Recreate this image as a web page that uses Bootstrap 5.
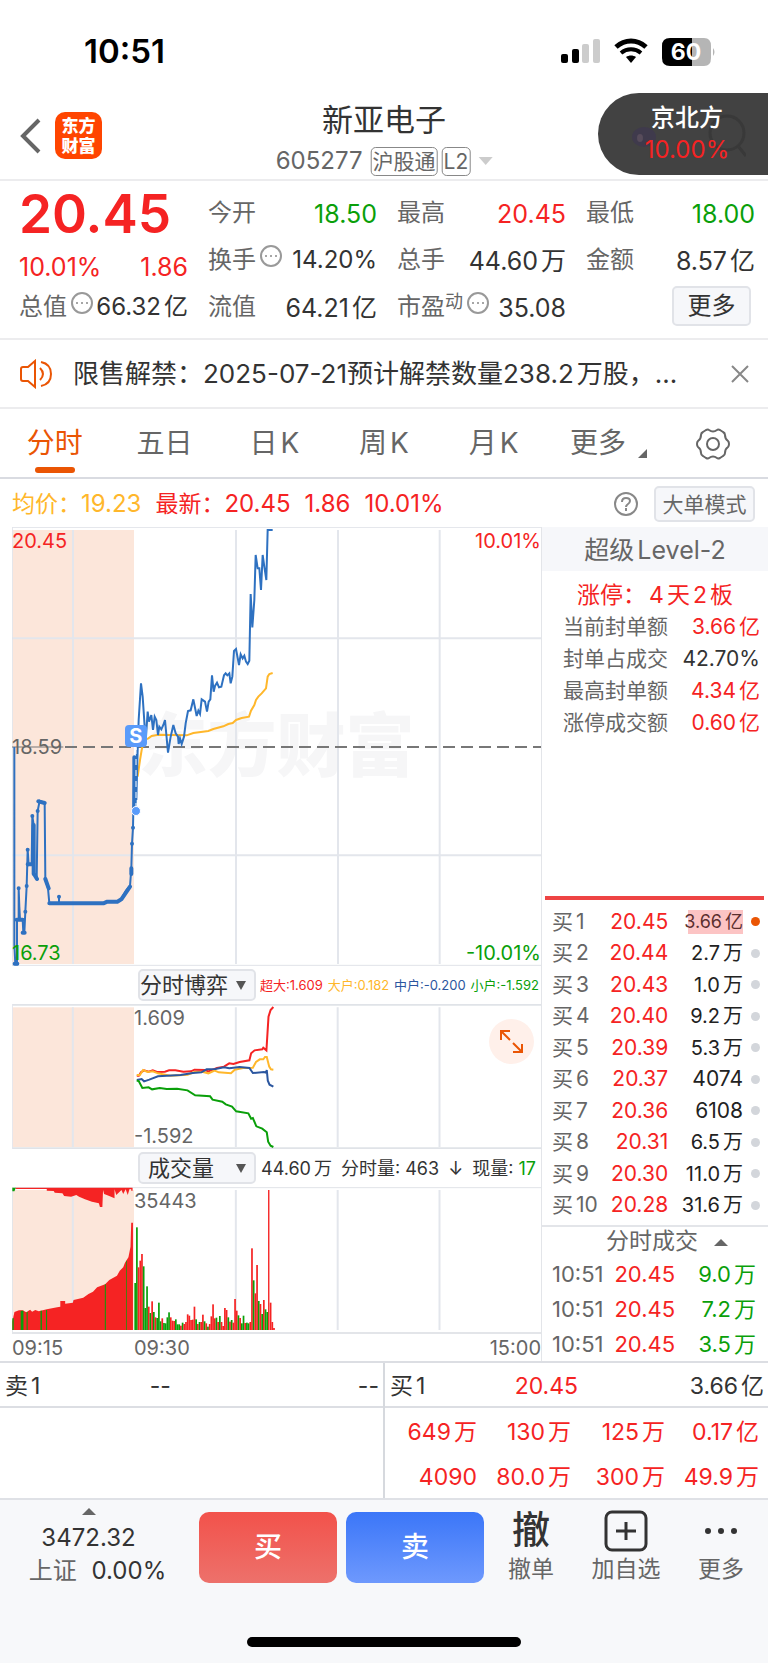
<!DOCTYPE html>
<html lang="zh-CN">
<head>
<meta charset="utf-8">
<meta name="viewport" content="width=device-width, initial-scale=1">
<title>新亚电子 605277</title>
<link href="https://cdn.jsdelivr.net/npm/bootstrap@5.3.0/dist/css/bootstrap.min.css" rel="stylesheet">
<style>
:root{--up:#f52323;--down:#0a9f0a;--ink:#333;--muted-ink:#666;--rule:#e3e5e9;--soft:#f6f7fa;--brand:#ea5504;--avg:#ffb72b}
body{font-family:Inter,"Noto Sans CJK SC",sans-serif;color:var(--ink);line-height:1.2;background:#fff}
a{color:inherit;text-decoration:none}
.up{color:var(--up)}.down{color:var(--down)}.dim{color:var(--muted-ink)}.avg{color:var(--avg)}.mid{color:#2b569f}
.unit{margin-left:3px}
.rule-b{border-bottom:2px solid #ececee}
.bare{background:none;border:0;padding:0;color:inherit}
.soft-btn{background:var(--soft);border:2px solid #e1e3e8;border-radius:5px;color:var(--ink);padding:0;line-height:1}
.tri-up,.tri-down{display:inline-block;border:7px solid transparent}
.tri-up{border-top:0;border-bottom:7px solid #666}
.tri-down{border-bottom:0;border-top:8px solid #ccc}

.status-bar{height:92px;padding:12px 52px 0 84px}
.clock{font-size:33px;font-weight:600;color:#000}
.app-head{height:89px;padding:0 0 0 20px}
.app-logo{width:47px;height:47px;margin-left:13px;border-radius:10px;background:#ff4500;color:#fff;font-size:17px;font-weight:900;line-height:20px}
.stock-name{font-size:31px;line-height:46px}
.head-title{padding-top:5px}
.code-line{font-size:24px;line-height:30px;margin-top:3px}
.tag-box{border:1px solid #888;border-radius:5px;font-size:21px;line-height:27px;padding:0 1px}
.float-pill{right:0;top:1px;width:170px;height:82px;border-radius:41px 0 0 41px;background:#424242;color:#fff;font-size:24px;padding:0 0 0 8px}
.pill-ghost{right:22px;top:18px}

.quote-grid{display:grid;grid-template-columns:repeat(4,1fr);column-gap:20px;padding:9px 13px 7px 19px;font-size:25px}
.quote-grid .cell{height:47px;display:flex;align-items:center;justify-content:space-between;white-space:nowrap}
.quote-grid .cell .dim{font-size:24px}
.quote-grid .big-price{font-size:53px;font-weight:600;padding-top:2px}
.quote-grid .chg{padding-top:13px}
.quote-grid .tight{font-size:24px}
.hint{margin:-1px 2px 0 4px}
.sup-note{font-size:18px;line-height:18px}
.more-btn{width:79px;height:40px;font-size:24px;margin:0 4px 3px 0}

.notice{height:69px;padding:0 19px 0 20px}
.notice-text{font-size:26px;margin-left:20px;margin-right:24px}
.tab-row{height:70px;font-size:28px;border-bottom:2px solid #d9dbe1}
.tab-row .tab-link{flex:1 1 14%;display:flex;align-items:center;justify-content:center;position:relative;color:var(--muted-ink);padding-top:2px}
.tab-row .tab-link.on{color:var(--brand)}
.tab-row .tab-link.on::after{content:"";position:absolute;bottom:4px;width:40px;height:6px;border-radius:3px;background:var(--brand)}
.tab-row .tab-more{padding-left:10px}
.corner{border-left:9px solid transparent;border-bottom:9px solid #666;margin:18px 0 0 12px}
.avg-row{height:48px;padding:2px 13px 0 12px;font-size:23px}
.avg-row .num{font-size:24px}
.avg-row .gap-l{margin-left:14px}
.mode-btn{width:101px;height:36px;font-size:21px;color:var(--muted-ink)}

.chart-col{padding-left:12px;border-right:1px solid var(--rule);min-width:0}
.plot{position:relative}
.plot svg.fill{display:block;width:100%;height:100%;position:relative}
.plot svg.fill *{vector-effect:non-scaling-stroke}
.plot-price{height:439px}.plot-game{height:145px}.plot-vol{height:145px}
.lbl{position:absolute;font-size:20px;line-height:20px}
.lbl-top{top:4px}.lbl-low{bottom:3px}
.open-x{left:122px}
.watermark{position:absolute;inset:0;display:flex;align-items:center;justify-content:center;font-size:69px;font-weight:900;color:#f6f6f7}
.trade-mark{position:absolute;width:22px;height:22px;border-radius:4px;background:#5a9bfa;color:#fff;font-size:20px;line-height:22px;font-weight:700;text-align:center}
.trade-dot{position:absolute;width:10px;height:10px;border-radius:50%;background:#5a9bfa;border:1px solid #fff}
.pane-head{height:38px;padding-left:126px}
.pick{position:relative;flex:none}
.pick select{appearance:none;width:118px;height:32px;font-size:22px;padding:0;display:block}
.pick.wide select{padding-left:8px}
.pick::after{content:"";position:absolute;right:10px;top:12px;border:5px solid transparent;border-top:9px solid #555;border-bottom:0;pointer-events:none}
.legend-line{font-size:13px;padding:2px 2px 0 4px}
.vol-line{font-size:18px;padding:2px 5px 0 5px}
.expand{position:absolute;right:7px;top:15px;width:45px;height:45px;border-radius:50%;background:#fff0ea}
.axis{height:29px;border-top:2px solid var(--rule);font-size:20px}

.side-col{width:226px;flex:none}
.level-head{height:44px;background:var(--soft);font-size:25px;padding-top:2px}
.limit-line{font-size:23px;line-height:32px;padding-top:8px}
.seal{padding:0 8px 0 21px;font-size:21px}
.seal>div{height:32px}
.book-rule{height:4px;background:#ee4444;margin:0 4px 0 3px}
.book{width:100%;height:315px;margin:6px 0 4px;font-size:21px;line-height:24px}
.book td,.book th,.deals td{padding:0;font-weight:400;white-space:nowrap}
.book th{padding-left:10px;width:58px}
.book .qty{width:74px;font-size:20px;text-align:right;color:#222}
.book .whole{font-size:21px}
.book .dot-cell{width:25px;text-align:center}
.book .pip{display:block;width:9px;height:9px;border-radius:50%;background:#d3d6db;margin:0 auto}
.book .pip.live{background:var(--brand)}
.seal-hit{background:linear-gradient(90deg,transparent 4px,#fcc4c4 4px);color:#5b2f2f;font-size:18px;display:block;margin-left:16px;white-space:nowrap}
.deals-head{height:32px;border-top:2px solid var(--rule);font-size:23px}
.deals{width:100%;height:104px;font-size:22px;line-height:24px}
.deals td:first-child{padding-left:10px}
.deals td:last-child{padding-right:12px}

.five{border-top:2px solid #dcdee3;font-size:23px}
.five .half{flex:1 1 0;min-width:0}
.five .half+.half{border-left:2px solid #d6d9de}
.five .top-line{height:45px;border-bottom:2px solid #dcdee3;display:grid;grid-template-columns:1fr 1fr 1fr;align-items:center;padding:4px 4px 0 5px}
.five .half:first-child .top-line span:nth-child(2){padding-left:20px}
.queue{display:grid;grid-template-columns:92px repeat(3,1fr);text-align:right;padding-right:9px}
.queue>span{height:45px;padding-top:5px;display:flex;align-items:center;justify-content:flex-end}

.dock{background:#f7f8fa;border-top:2px solid #dfe1e6;padding:8px 0 0;height:165px}
.index-box{width:199px;padding-right:4px;font-size:24px;line-height:29px}
.index-box .shift{margin-right:18px}
.trade-btn{width:138px;height:71px;margin-top:4px;border:0;border-radius:10px;color:#fff;font-size:28px;font-weight:500}
.buy-btn{background:linear-gradient(#f2524b,#ed716b)}
.sell-btn{background:linear-gradient(#3b76f8,#6e99fd);margin-left:9px}
.tools{padding:2px 24px 0}
.tool{font-size:23px;color:var(--muted-ink);line-height:34px}
.tool .glyph{height:42px;color:#333;font-size:38px;line-height:38px;font-weight:500}
.home-bar{width:274px;height:10px;border-radius:5px;background:#000}
</style>
</head>
<body>
<div class="container-fluid p-0">

  <div class="status-bar d-flex align-items-center justify-content-between">
    <span class="clock">10:51</span>
    <svg width="156" height="28" viewBox="0 0 156 28" role="img" aria-label="信号与电量">
      <g><rect x="1" y="16" width="7" height="9" rx="2"/><rect x="12" y="11" width="7" height="14" rx="2"/><rect x="22" y="6" width="7" height="19" rx="2" fill="#ccc"/><rect x="33" y="1" width="7" height="24" rx="2" fill="#ccc"/></g>
      <g fill="none" stroke="#000" stroke-width="5"><path d="M56 9c9-8 21-8 30 0"/><path d="M61 15c6-5 14-5 20 0" stroke-width="4"/></g>
      <path d="M71 25l-5-6c3-2 7-2 10 0z"/>
      <path d="M110 0h22v28h-22q-8 0-8-8V8q0-8 8-8z"/><path d="M132 0h12q7 0 7 8v12q0 8-7 8h-12z" fill="#b5b5b5"/><path d="M153 10q3 4 0 8z" fill="#b5b5b5"/>
      <text x="126" y="22" font-size="23" font-weight="700" fill="#fff" text-anchor="middle">60</text>
    </svg>
  </div>

  <header class="app-head d-flex align-items-center position-relative rule-b">
    <button class="bare" aria-label="返回"><svg width="22" height="36" viewBox="0 0 22 36" class="d-block"><path d="M19 2L3 18l16 16" fill="none" stroke="#666" stroke-width="4"/></svg></button>
    <div class="app-logo d-flex align-items-center justify-content-center"><span>东方<br>财富</span></div>
    <div class="head-title position-absolute start-50 translate-middle-x text-center text-nowrap top-0">
      <h1 class="stock-name fw-normal m-0">新亚电子</h1>
      <div class="code-line dim d-flex align-items-center">605277<span class="tag-box ms-2">沪股通</span><span class="tag-box ms-1">L2</span><span class="tri-down ms-2"></span></div>
    </div>
    <button class="float-pill border-0 position-absolute">
      <svg class="pill-ghost position-absolute" width="120" height="50" viewBox="0 0 120 50" fill="none"><ellipse cx="18" cy="26" rx="12" ry="10" fill="#3f3a4c"/><ellipse cx="14" cy="27" rx="3" ry="4" fill="#574c5b"/><circle cx="101" cy="22" r="17" stroke="#393939" stroke-width="3"/><path d="M112 35l8 10" stroke="#393939" stroke-width="3"/></svg>
      <span class="d-block position-relative fw-medium lh-1 pb-2">京北方</span>
      <span class="d-block position-relative up lh-1">10.00%</span>
    </button>
  </header>

  <section class="quote-grid rule-b">
    <div>
      <div class="cell big-price up">20.45</div>
      <div class="cell chg up"><span>10.01%</span><span>1.86</span></div>
      <div class="cell tight"><span class="dim d-flex">总值<svg class="hint" width="22" height="22"><use href="#dots"/></svg></span><span>66.32<span class="unit">亿</span></span></div>
    </div>
    <div>
      <div class="cell"><span class="dim">今开</span><span class="down">18.50</span></div>
      <div class="cell tight"><span class="dim d-flex">换手<svg class="hint" width="22" height="22"><use href="#dots"/></svg></span><span>14.20%</span></div>
      <div class="cell"><span class="dim">流值</span><span>64.21<span class="unit">亿</span></span></div>
    </div>
    <div>
      <div class="cell"><span class="dim">最高</span><span class="up">20.45</span></div>
      <div class="cell"><span class="dim">总手</span><span>44.60<span class="unit">万</span></span></div>
      <div class="cell"><span class="dim d-flex">市盈<span class="sup-note">动</span><svg class="hint ms-1" width="22" height="22"><use href="#dots"/></svg></span><span>35.08</span></div>
    </div>
    <div>
      <div class="cell"><span class="dim">最低</span><span class="down">18.00</span></div>
      <div class="cell"><span class="dim">金额</span><span>8.57<span class="unit">亿</span></span></div>
      <div class="cell justify-content-end"><button class="soft-btn more-btn">更多</button></div>
    </div>
  </section>

  <section class="notice d-flex align-items-center rule-b">
    <svg width="33" height="30" viewBox="0 0 33 30" fill="none" stroke="#ea5504" stroke-width="2" class="flex-shrink-0"><path d="M15 2v26l-7-6H3q-2 0-2-2v-10q0-2 2-2h5z"/><path d="M20 9q6 6 0 12M21 3q10 2 10 12t-10 12"/></svg>
    <div class="notice-text flex-grow-1 text-nowrap overflow-hidden">限售解禁：2025-07-21预计解禁数量238.2<span class="unit">万股，...</span></div>
    <button class="bare" aria-label="关闭"><svg width="18" height="18" viewBox="0 0 18 18" class="d-block"><path d="M1 1l16 16M17 1L1 17" stroke="#888" stroke-width="2"/></svg></button>
  </section>

  <nav class="tab-row d-flex">
    <a href="#" class="tab-link on">分时</a><a href="#" class="tab-link">五日</a><a href="#" class="tab-link">日<span class="unit">K</span></a><a href="#" class="tab-link">周<span class="unit">K</span></a><a href="#" class="tab-link">月<span class="unit">K</span></a><a href="#" class="tab-link tab-more">更多<span class="corner"></span></a>
    <a href="#" class="tab-link" aria-label="设置"><svg width="34" height="32" viewBox="0 0 34 32" fill="none" stroke="#666" stroke-width="2"><path d="M10 2q2-1 3 0 4 3 8 0 1-1 3 0l3 2q2 1 2 3 0 4 3 6 1 1 1 3t-1 3q-3 2-3 6 0 2-2 3l-3 2q-2 1-3 0-4-3-8 0-1 1-3 0l-3-2q-2-1-2-3 0-4-3-6-1-1-1-3t1-3q3-2 3-6 0-2 2-3z"/><circle cx="17" cy="16" r="6"/></svg></a>
  </nav>

  <div class="avg-row d-flex align-items-center text-nowrap">
    <span class="avg">均价：<span class="num">19.23</span></span><span class="up gap-l">最新：<span class="num">20.45</span></span><span class="up num gap-l">1.86</span><span class="up num gap-l">10.01%</span>
    <button class="bare ms-auto me-3" aria-label="说明"><svg width="24" height="24" viewBox="0 0 24 24" class="d-block" fill="none" stroke="#888" stroke-width="2"><circle cx="12" cy="12" r="11"/><path d="M8 10q0-4 4-4t4 3q0 2-3 4-1 1-1 2M12 16v3"/></svg></button>
    <button class="soft-btn mode-btn">大单模式</button>
  </div>

  <main class="d-flex">
    <div class="chart-col flex-grow-1">
      <div class="plot plot-price">
        <div class="watermark" aria-hidden="true">东方财富</div>
        <svg class="fill" viewBox="36 21 1587 1317" preserveAspectRatio="none" fill="none">
          <rect x="38" y="30" width="364" height="1302" fill="#fce6da"/>
          <path d="M219 30V1332M708 30V1332M1014 30V1332M1319 30V1332M36 355H1623M36 1006H1623" stroke="#e3e6ec" stroke-width="2"/>
          <path d="M36 22H1623M37 22V1338M36 1336H1623" stroke="#e0e3e8" stroke-width="1"/>
          <path d="M195 681H1623" stroke="#777" stroke-width="2" stroke-dasharray="12 6"/><path d="M36 681H190" stroke="#777" stroke-width="1"/>
          <polyline stroke="#ffb72b" stroke-width="2" points="413,770 420,720 425,690 432,660 445,655 455,648 475,644 560,646 580,639 625,633 640,627 670,619 685,612 698,609 708,600 725,594 747,590 753,572 763,555 768,540 775,530 785,520 798,505 803,470 808,462 818,459"/>
          <polyline stroke="#2e71c1" stroke-width="2" points="43,681 43,1273 46,1333 51,1333 51,1199 56,1199 56,1105 58,1160 60,1199 68,1199 70,1238 73,1238 76,1175 80,1098 83,989 86,1035 95,1030 97,888 101,915 103,1062 110,1077 113,873 119,842 134,849 136,1077 144,1105 148,1150 177,1150 177,1130 177,1150 310,1150 322,1143 348,1146 362,1140 378,1112 390,1098 394,1045 396,971 399,923 403,712 406,870 411,690 409,840 413,690 416,600 423,490 428,530 434,620 438,650 443,575 447,605 454,585 459,630 464,590 469,600 474,645 478,620 484,628 490,615 495,600 504,698 512,650 520,615 527,640 534,650 536,672 540,655 545,672 552,650 557,610 564,573 572,571 580,538 590,588 595,572 600,582 605,538 615,545 621,575 626,545 631,538 636,466 641,515 645,498 651,488 657,502 664,500 672,466 677,460 682,466 688,460 692,490 697,470 702,393 708,387 717,435 722,403 728,415 733,407 738,425 743,432 748,422 752,222 757,322 763,240 767,105 773,145 778,145 783,210 788,105 793,140 799,180 803,30 818,30"/>
          <path d="M148 1150H310L322 1145H352L364 1138L390 1100M44 1331H52M50 1199H68M68 1238H74M83 1033H96M101 915V1062M102 1062L111 1077M115 844L134 849M136 1077L146 1105M403 712V870M394 1045V1062" stroke="#2e71c1" stroke-width="4" stroke-linecap="round" stroke-linejoin="round"/>
          <path d="M56 1105h0M83 989h0M80 1098h0M76 1175h0M97 888h0M113 873h0M177 1130h0M396 971h0M399 923h0" stroke="#2e71c1" stroke-width="4" stroke-linecap="round"/>
          <path d="M408 684V860" stroke="#fff" stroke-width="1" stroke-dasharray="6 5"/>
        </svg>
        <span class="trade-dot translate-middle" style="left:23.4%;top:64.7%"></span>
        <span class="trade-mark translate-middle" style="left:23.4%;top:47.6%">S</span>
        <span class="lbl lbl-top up start-0">20.45</span><span class="lbl lbl-top up end-0">10.01%</span>
        <span class="lbl dim start-0 top-50 translate-middle-y">18.59</span>
        <span class="lbl lbl-low down start-0">16.73</span><span class="lbl lbl-low down end-0">-10.01%</span>
      </div>

      <div class="pane-head d-flex align-items-center">
        <label class="pick"><select class="soft-btn" aria-label="副图一"><option>分时博弈</option></select></label>
        <div class="legend-line flex-grow-1 d-flex justify-content-between text-nowrap"><span class="up">超大:1.609</span><span class="avg">大户:0.182</span><span class="mid">中户:-0.200</span><span class="down">小户:-1.592</span></div>
      </div>
      <div class="plot plot-game">
        <svg class="fill" viewBox="35 132 1522 435" preserveAspectRatio="none" fill="none" stroke-width="2">
          <rect x="36" y="142" width="350" height="419" fill="#fce6da"/>
          <path d="M210 142V561M679 142V561M972 142V561M1265 142V561" stroke="#e3e6ec"/>
          <path d="M35 134H1557M35 565H1557" stroke="#e0e3e8"/><path d="M36 132V567" stroke="#e3e6ec" stroke-width="1"/>
          <polyline stroke="#f52323" points="394,347 400,347 406,337 415,331 428,335 440,331 452,336 475,335 487,331 505,331 528,335 550,334 560,329 590,330 600,334 625,324 645,320 660,310 672,312 690,306 718,301 723,280 733,271 755,268 758,263 767,271 770,220 773,170 779,150 787,141"/>
          <polyline stroke="#ffb72b" points="394,345 403,345 412,330 425,336 440,334 455,340 490,347 540,344 560,336 585,336 600,340 618,332 630,337 665,340 676,329 700,324 728,323 737,306 748,298 758,298 763,291 768,291 775,320 780,328 787,329"/>
          <polyline stroke="#2b569f" points="394,360 408,357 415,364 430,359 455,349 480,347 520,345 555,339 580,337 595,328 620,327 645,322 660,325 690,321 718,324 728,339 760,336 766,338 768,330 771,362 776,374 787,380"/>
          <polyline stroke="#0a9f0a" points="394,361 400,364 410,384 428,382 438,388 460,384 480,387 510,386 540,391 562,406 605,409 612,419 640,425 650,433 668,440 680,454 715,460 723,476 728,474 738,499 755,506 768,517 772,545 779,557 787,561"/>
        </svg>
        <span class="lbl lbl-top dim open-x">1.609</span><span class="lbl lbl-low dim open-x">-1.592</span>
        <button class="expand border-0 p-0" aria-label="放大"><svg width="45" height="45" viewBox="0 0 45 45" fill="none" stroke="#ea5504" stroke-width="2"><path d="M12 21v-9h9M12 12l9 9M33 25v8h-9M33 33l-9-9"/></svg></button>
      </div>

      <div class="pane-head d-flex align-items-center">
        <label class="pick wide"><select class="soft-btn" aria-label="副图二"><option>成交量</option></select></label>
        <div class="vol-line flex-grow-1 d-flex justify-content-between text-nowrap"><span>44.60<span class="unit">万</span></span><span>分时量: 463</span><span>↓</span><span>现量: <span class="down">17</span></span></div>
      </div>
      <div class="plot plot-vol">
        <svg class="fill" viewBox="35 111 1522 435" preserveAspectRatio="none" fill="none">
          <rect x="36" y="120" width="350" height="420" fill="#fce6da"/>
          <path d="M210 120V540M679 120V540M972 120V540M1265 120V540" stroke="#e3e6ec" stroke-width="2"/>
          <path d="M35 113H1557M36 111V549" stroke="#e0e3e8" stroke-width="1"/>
          <path fill="#f52323" d="M36 540V515L42 486 55 481H66L76 487 87 479 93 485 102 480 112 484 135 478 165 472 174 470V453H188V461L210 458 212 450 240 443 255 432 268 425 280 412 303 403 315 390 337 377 345 362 355 352 360 338 370 322 376 290 378 218H383V540Z"/>
          <path fill="#f52323" d="M45 113H382V122H378V118H373L368 135 362 118 355 132 350 120 335 135 330 118V145L313 137 300 132 297 120 295 171H288L285 160 265 155 245 148 228 140 220 135 205 140 185 138 180 130 158 128 155 123 135 122V117H45Z"/>
          <path fill="#0a9f0a" d="M36 113H46L42 124H36ZM36 540V505H40V540ZM60 540V482H68V540ZM77 540V486H80V540ZM117 540V482H121V540ZM133 540V480H136V540ZM302 540V403H305V540ZM363 540V332H365V540Z"/>
          <g id="volume-bars"></g>
        </svg>
        <span class="lbl lbl-top dim open-x">35443</span>
      </div>
      <div class="axis dim position-relative d-flex justify-content-between align-items-center"><span>09:15</span><span class="position-absolute open-x">09:30</span><span>15:00</span></div>
    </div>

    <aside class="side-col d-flex flex-column">
      <div class="level-head dim d-flex align-items-center justify-content-center">超级<span class="unit">Level-2</span></div>
      <div class="limit-line up text-center">涨停：<span class="unit">4</span><span class="unit">天</span><span class="unit">2</span><span class="unit">板</span></div>
      <div class="seal">
        <div class="d-flex justify-content-between align-items-center"><span class="dim">当前封单额</span><span class="up">3.66<span class="unit">亿</span></span></div>
        <div class="d-flex justify-content-between align-items-center"><span class="dim">封单占成交</span><span>42.70%</span></div>
        <div class="d-flex justify-content-between align-items-center"><span class="dim">最高封单额</span><span class="up">4.34<span class="unit">亿</span></span></div>
        <div class="d-flex justify-content-between align-items-center"><span class="dim">涨停成交额</span><span class="up">0.60<span class="unit">亿</span></span></div>
      </div>
      <div class="book-rule mt-auto"></div>
      <table class="book">
        <tbody>
          <tr><th class="dim">买<span class="unit">1</span></th><td class="up text-end">20.45</td><td class="qty"><span class="seal-hit">3.66<span class="unit">亿</span></span></td><td class="dot-cell"><i class="pip live"></i></td></tr>
          <tr><th class="dim">买<span class="unit">2</span></th><td class="up text-end">20.44</td><td class="qty">2.7<span class="unit">万</span></td><td class="dot-cell"><i class="pip"></i></td></tr>
          <tr><th class="dim">买<span class="unit">3</span></th><td class="up text-end">20.43</td><td class="qty">1.0<span class="unit">万</span></td><td class="dot-cell"><i class="pip"></i></td></tr>
          <tr><th class="dim">买<span class="unit">4</span></th><td class="up text-end">20.40</td><td class="qty">9.2<span class="unit">万</span></td><td class="dot-cell"><i class="pip"></i></td></tr>
          <tr><th class="dim">买<span class="unit">5</span></th><td class="up text-end">20.39</td><td class="qty">5.3<span class="unit">万</span></td><td class="dot-cell"><i class="pip"></i></td></tr>
          <tr><th class="dim">买<span class="unit">6</span></th><td class="up text-end">20.37</td><td class="qty whole">4074</td><td class="dot-cell"><i class="pip"></i></td></tr>
          <tr><th class="dim">买<span class="unit">7</span></th><td class="up text-end">20.36</td><td class="qty whole">6108</td><td class="dot-cell"><i class="pip"></i></td></tr>
          <tr><th class="dim">买<span class="unit">8</span></th><td class="up text-end">20.31</td><td class="qty">6.5<span class="unit">万</span></td><td class="dot-cell"><i class="pip"></i></td></tr>
          <tr><th class="dim">买<span class="unit">9</span></th><td class="up text-end">20.30</td><td class="qty">11.0<span class="unit">万</span></td><td class="dot-cell"><i class="pip"></i></td></tr>
          <tr><th class="dim">买<span class="unit">10</span></th><td class="up text-end">20.28</td><td class="qty">31.6<span class="unit">万</span></td><td class="dot-cell"><i class="pip"></i></td></tr>
        </tbody>
      </table>
      <div class="deals-head dim d-flex align-items-center justify-content-center ps-4">分时成交<span class="tri-up ms-3"></span></div>
      <table class="deals">
        <tbody>
          <tr><td class="dim">10:51</td><td class="up">20.45</td><td class="down text-end">9.0<span class="unit">万</span></td></tr>
          <tr><td class="dim">10:51</td><td class="up">20.45</td><td class="down text-end">7.2<span class="unit">万</span></td></tr>
          <tr><td class="dim">10:51</td><td class="up">20.45</td><td class="down text-end">3.5<span class="unit">万</span></td></tr>
        </tbody>
      </table>
    </aside>
  </main>

  <section class="five d-flex">
    <div class="half">
      <div class="top-line"><span>卖<span class="unit">1</span></span><span>--</span><span class="text-end">--</span></div>
    </div>
    <div class="half">
      <div class="top-line"><span>买<span class="unit">1</span></span><span class="up">20.45</span><span class="text-end">3.66<span class="unit">亿</span></span></div>
      <div class="queue up">
        <span>649<span class="unit">万</span></span><span>130<span class="unit">万</span></span><span>125<span class="unit">万</span></span><span>0.17<span class="unit">亿</span></span>
        <span>4090</span><span>80.0<span class="unit">万</span></span><span>300<span class="unit">万</span></span><span>49.9<span class="unit">万</span></span>
      </div>
    </div>
  </section>

  <footer class="dock d-flex flex-column">
    <div class="d-flex align-items-start">
      <div class="index-box d-flex flex-column align-items-center flex-shrink-0 text-nowrap">
        <span class="tri-up shift mb-2"></span><span class="shift">3472.32</span>
        <span class="mt-1"><span class="dim me-2">上证</span> 0.00%</span>
      </div>
      <button class="trade-btn buy-btn flex-shrink-0">买</button>
      <button class="trade-btn sell-btn flex-shrink-0">卖</button>
      <div class="tools flex-grow-1 d-flex justify-content-between">
        <button class="bare tool"><span class="glyph d-block">撤</span>撤单</button>
        <button class="bare tool"><span class="glyph d-block"><svg class="d-block mx-auto" width="44" height="42" viewBox="0 0 44 42" fill="none" stroke="#333" stroke-width="3"><rect x="2" y="2" width="40" height="38" rx="6"/><path d="M22 12v18M12 21h20"/></svg></span>加自选</button>
        <button class="bare tool"><span class="glyph d-block"><svg class="d-block mx-auto" width="44" height="42" viewBox="0 0 44 42" fill="#333"><circle cx="9" cy="21" r="3"/><circle cx="22" cy="21" r="3"/><circle cx="35" cy="21" r="3"/></svg></span>更多</button>
      </div>
    </div>
    <div class="home-bar mx-auto mt-auto mb-3"></div>
  </footer>
</div>

<svg width="0" height="0" class="position-absolute">
  <symbol id="dots" viewBox="0 0 22 22"><circle cx="11" cy="11" r="10" fill="none" stroke="#999" stroke-width="2"/><circle cx="6" cy="11" r="1" fill="#888"/><circle cx="11" cy="11" r="1" fill="#888"/><circle cx="16" cy="11" r="1" fill="#888"/></symbol>
</svg>

<script src="https://cdn.jsdelivr.net/npm/bootstrap@5.3.0/dist/js/bootstrap.bundle.min.js"></script>
<script>
// One bar per minute since the open: top edge in plot units, r = up, g = down
const bars = "399g 232g 352r 332r 312r 349g 474g 409g 470r 489g 454r 486g 502r 504g 458g 514g 505r 519g 520g 502g 487g 502r 512r 513r 508g 523g 523g 527r 518g 522r 516r 493r 497r 510r 509r 470r 508g 522r 516g 516r 494r 514g 520r 530g 522r 499r 463r 505r 503g 516r 498g 516r 528r 474r 480r 502g 515r 510g 518r 447r 482r 496g 504r 520g 497g 519r 518g 520g 516r 295r 391g 430r 345r 453g 462r 492g 450r 478g 486g 120r 458r 516r 534r".split(" ");
const step = 4.87;
let html = "";
bars.forEach((b, i) => {
  const y = parseInt(b, 10), x = (387 + i * step).toFixed(1);
  html += `<rect x="${x}" y="${y}" width="${y === 120 ? 4 : 4.9}" height="${540 - y}" fill="${b.endsWith("r") ? "#f52323" : "#0a9f0a"}"/>`;
});
document.getElementById("volume-bars").innerHTML = html;
</script>
</body>
</html>
